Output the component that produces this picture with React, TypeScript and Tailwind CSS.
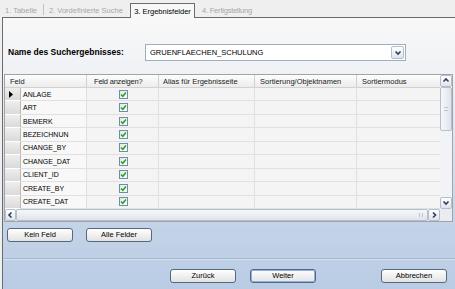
import React from 'react';

const rows = ['ANLAGE', 'ART', 'BEMERK', 'BEZEICHNUN', 'CHANGE_BY', 'CHANGE_DAT', 'CLIENT_ID', 'CREATE_BY', 'CREATE_DAT'];

const Arrow = ({ dir }: { dir: 'up' | 'down' | 'left' | 'right' }) => {
  const d = {
    up: 'M1.5 4.5 L4 2 L6.5 4.5',
    down: 'M1.5 2.5 L4 5 L6.5 2.5',
    left: 'M4.5 1.5 L2 4 L4.5 6.5',
    right: 'M3 1.5 L5.5 4 L3 6.5',
  }[dir];
  return (
    <svg width="8" height="8" viewBox="0 0 8 8">
      <path d={d} fill="none" stroke="#2f3f5c" strokeWidth="1.6" />
    </svg>
  );
};

const ScrollBtn = ({ dir, className }: { dir: 'up' | 'down' | 'left' | 'right'; className: string }) => (
  <div className={`flex items-center justify-center rounded-[2px] border border-[#b4bfce] bg-linear-to-b from-white to-[#dfe4ec] ${className}`}>
    <Arrow dir={dir} />
  </div>
);

const Check = () => (
  <div className="flex h-[9px] w-[9px] items-center justify-center border border-[#6f8cab] bg-linear-to-br from-[#e6e6e2] to-white">
    <svg width="7" height="7" viewBox="0 0 7 7">
      <path d="M1 3.5 L2.8 5.3 L6 1.6" fill="none" stroke="#21a321" strokeWidth="1.5" />
    </svg>
  </div>
);

const Btn = ({ label, def }: { label: string; def?: boolean }) => (
  <button
    className={`flex h-[14px] w-[66px] items-center justify-center rounded-[3px] border border-[#56687f] bg-linear-to-b from-white to-[#e2e2e2] text-[7.5px] leading-none text-black ${
      def ? 'shadow-[inset_0_0_0_1px_#8fb0e4]' : ''
    }`}
  >
    {label}
  </button>
);

export default function App() {
  return (
    <div className="h-[289px] w-[455px] overflow-hidden whitespace-nowrap bg-[#efefef] font-['Liberation_Sans',Arial,sans-serif] text-[7.5px] leading-[9px] text-black">
      {/* tabs */}
      <div className="flex h-[17px] items-end pl-[5px] text-[#a7a7a7]">
        <div className="flex h-[14px] w-[38px] items-center">1. Tabelle</div>
        <div className="mb-[2px] h-[11px] w-px bg-[#c2c2c2]" />
        <div className="flex h-[14px] w-[86px] items-center pl-[5px]">2. Vordefinierte Suche</div>
        <div className="relative z-10 -mb-px flex h-[15px] w-[65px] items-center justify-center border border-b-0 border-[#6c6c6c] bg-[#f8f8f8] text-black">
          3. Ergebnisfelder
        </div>
        <div className="flex h-[14px] items-center pl-[7px] tracking-[-0.2px]">4. Fertigstellung</div>
      </div>

      {/* panel */}
      <div className="ml-[2px] h-[272px] border-l border-t border-[#6c6c6c] bg-[linear-gradient(to_bottom,#f8f8f8_0%,#eef1f5_22%,#c6d5e8_72%,#b9cce4_100%)]">
        <div className="mt-[26px] flex h-[17px] items-center">
          <div className="w-[142px] pl-[5px] text-[8.5px] font-bold">Name des Suchergebnisses:</div>
          <div className="flex h-[17px] w-[261px] items-center justify-between border border-[#9fadbf] bg-white pl-[4px] pr-[1px]">
            <span>GRUENFLAECHEN_SCHULUNG</span>
            <ScrollBtn dir="down" className="h-[13px] w-[13px]" />
          </div>
        </div>

        {/* grid */}
        <div className="ml-px mt-[13px] w-[449px] border border-[#a3a3a3] bg-[#f4f4f4]">
          <div className="flex">
            <div className="w-[435px]">
              <div className="flex h-[13px] border-b border-[#d2d2d2] bg-linear-to-b from-[#fdfdfd] to-[#ececec] text-[#222]">
                <div className="flex w-[82px] items-center border-r border-[#d0d0d0] pl-[5px]">Feld</div>
                <div className="flex w-[72px] items-center border-r border-[#d0d0d0] pl-[7px] tracking-[-0.2px]">Feld anzeigen?</div>
                <div className="flex w-[96px] items-center border-r border-[#d0d0d0] pl-[4px]">Alias für Ergebnisseite</div>
                <div className="flex w-[102px] items-center border-r border-[#d0d0d0] pl-[5px]">Sortierung/Objektnamen</div>
                <div className="flex w-[83px] items-center pl-[5px]">Sortiermodus</div>
              </div>
              <div className="flex h-[121px] flex-col text-[7px]">
                {rows.map((r, i) => (
                  <div key={r} className="flex min-h-0 flex-1">
                    <div className="flex w-[16px] items-center border-b border-r border-b-white border-r-[#b9b9b9] bg-linear-to-b from-[#eeeeee] to-[#dadada] pl-[4px]">
                      {i === 0 && (
                        <svg width="4" height="7" viewBox="0 0 4 7">
                          <path d="M0 0 L4 3.5 L0 7 Z" fill="#000" />
                        </svg>
                      )}
                    </div>
                    <div className="flex w-[66px] items-center border-b border-r border-[#e0e0e0] bg-[#f8f8f8] pl-[2px]">{r}</div>
                    <div className="flex w-[72px] items-center justify-center border-b border-r border-[#e0e0e0] pl-px">
                      <Check />
                    </div>
                    <div className="w-[96px] border-b border-r border-[#e0e0e0]" />
                    <div className="w-[102px] border-b border-r border-[#e0e0e0]" />
                    <div className="w-[83px] border-b border-[#e0e0e0]" />
                  </div>
                ))}
              </div>
            </div>
            {/* vertical scrollbar */}
            <div className="flex h-[134px] w-[12px] flex-col bg-[#f1f3f6]">
              <ScrollBtn dir="up" className="h-[12px] w-[12px]" />
              <div className="flex h-[44px] w-[12px] items-center justify-center rounded-[2px] border border-[#b4bfce] bg-linear-to-r from-[#f6f7f9] to-[#dfe4ec]">
                <div className="h-[4px] w-[4px] border-y border-[#bcc4d0]" />
              </div>
              <div className="flex-1" />
              <ScrollBtn dir="down" className="h-[12px] w-[12px]" />
            </div>
          </div>
          {/* horizontal scrollbar */}
          <div className="flex h-[12px] bg-[#f1f3f6]">
            <ScrollBtn dir="left" className="h-[12px] w-[11px]" />
            <div className="flex h-[12px] w-[412px] items-center justify-end rounded-[2px] border border-[#b4bfce] bg-linear-to-b from-[#f6f7f9] to-[#dfe4ec] pr-[4px]">
              <div className="h-[4px] w-[4px] border-x border-[#bcc4d0]" />
            </div>
            <ScrollBtn dir="right" className="h-[12px] w-[12px]" />
            <div className="h-[12px] w-[12px] bg-[#e9ecf1]" />
          </div>
        </div>

        <div className="ml-[4px] mt-[6px] flex gap-[13px]">
          <Btn label="Kein Feld" />
          <Btn label="Alle Felder" />
        </div>

        <div className="mt-[16px] h-[2px] border-t border-[#a5b8d0] bg-[#d5e0ee]" />

        <div className="mt-[9px] flex">
          <div className="ml-[167px]">
            <Btn label="Zurück" />
          </div>
          <div className="ml-[14px]">
            <Btn label="Weiter" def />
          </div>
          <div className="ml-[65px]">
            <Btn label="Abbrechen" />
          </div>
        </div>
      </div>
    </div>
  );
}
